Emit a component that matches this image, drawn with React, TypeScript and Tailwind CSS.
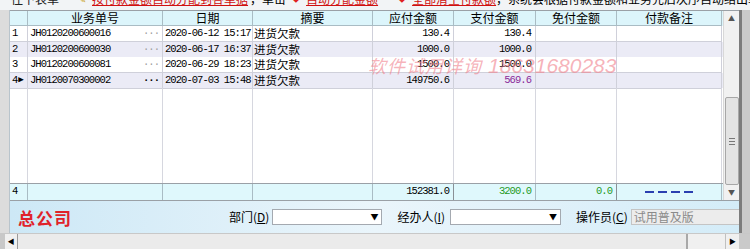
import React from "react";

const cols = "grid grid-cols-[18px_135px_90px_120px_81px_82px_81px_105px]";
const mono = "font-['Liberation_Mono',monospace] text-[10.5px] tracking-[-0.95px] whitespace-nowrap overflow-hidden";
const line = "border-r border-b border-[#cfd0da]";

const rows = [
  { no: "1", id: "JH0120200600016", date: "2020-06-12 15:17", memo: "进货欠款", due: "130.4", pay: "130.4", h: "h-[16px]" },
  { no: "2", id: "JH0120200600030", date: "2020-06-17 16:37", memo: "进货欠款", due: "1000.0", pay: "1000.0", h: "h-[15px]" },
  { no: "3", id: "JH0120200600081", date: "2020-06-29 18:23", memo: "进货欠款", due: "1500.0", pay: "1500.0", h: "h-[16px]" },
  { no: "4", id: "JH0120070300002", date: "2020-07-03 15:48", memo: "进货欠款", due: "149750.6", pay: "569.6", h: "h-[15px]" },
];

const headers = ["", "业务单号", "日期", "摘要", "应付金额", "支付金额", "免付金额", "付款备注"];

const Combo = ({ w }: { w: string }) => (
  <div className={`${w} shrink-0 h-[16px] bg-white border border-[#a4a9b0] flex justify-end items-center pr-[3px]`}>
    <span className="text-[8px] leading-none text-black">▼</span>
  </div>
);

const App = () => {
  return (
    <div className="w-[750px] h-[249px] overflow-hidden bg-[#e2e2e2] flex flex-col relative font-['Noto_Sans_CJK_SC',sans-serif] text-black">
      {/* top hint line, mostly scrolled away */}
      <div className="h-[10px] shrink-0 overflow-hidden bg-[#f2f4f6]">
        <div className="-mt-[9px] flex items-center whitespace-nowrap text-[12px] leading-[16px] pl-[11px]">
          <span className="text-[#222]">往下表单</span>
          <span className="ml-[19px] text-[#c9a21c] text-[10px]">✎</span>
          <span className="ml-[6px] text-[#d01010] underline">按付款金额自动分配到各单据</span>
          <span className="ml-[2px]">，单击</span>
          <span className="ml-[6px] text-[#e02020] text-[8px]">◆</span>
          <span className="ml-[6px] text-[#d01010] underline">自动分配金额</span>
          <span className="ml-[20px] text-[#e02020] text-[8px]">◆</span>
          <span className="ml-[6px] text-[#d01010] underline">全部清空付款额</span>
          <span>，系统会根据付款金额和业务先后次序自动结出单据</span>
        </div>
      </div>

      <div className="flex h-[223px] shrink-0">
        <div className="w-[10px] shrink-0 bg-[#dcdcdc] border-r border-[#b8c4cc]" />

        <div className="w-[729px] shrink-0 flex flex-col">
          {/* grid */}
          <div className="h-[191px] shrink-0 flex border-t border-b border-[#9aa0a6] bg-white">
            <div className="w-[713px] flex flex-col">
              <div className={`${cols} h-[15px] shrink-0 bg-[#dcf5fb] text-[12px] leading-[14px]`}>
                {headers.map((h, i) => (
                  <div key={i} className="border-r border-b border-[#a9bcc4] text-center whitespace-nowrap">
                    {h}
                  </div>
                ))}
              </div>
              {rows.map((r, i) => (
                <div key={r.no} className={`${cols} ${r.h} shrink-0 ${i % 2 ? "bg-[#ebebf6]" : "bg-white"} leading-[15px]`}>
                  <div className={`${line} ${mono} pl-[2px] flex items-center gap-[1px]`}>
                    {r.no}
                    {r.no === "4" && <span className="text-[9px] tracking-normal">▶</span>}
                  </div>
                  <div className={`${line} ${mono} pl-[2px] flex justify-between pr-[3px]`}>
                    <span>{r.id}</span>
                    <span className={r.no === "4" ? "text-black font-bold" : "text-[#a0a0a0]"}>···</span>
                  </div>
                  <div className={`${line} ${mono} pl-[2px]`}>{r.date}</div>
                  <div className={`${line} text-[11.5px] pl-[1px] whitespace-nowrap`}>{r.memo}</div>
                  <div className={`${line} ${mono} text-right pr-[4px]`}>{r.due}</div>
                  <div className={`${line} ${mono} text-right pr-[4px] ${r.no === "4" ? "text-[#8a2a9a]" : ""}`}>{r.pay}</div>
                  <div className={line} />
                  <div className={line} />
                </div>
              ))}
              <div className={`${cols} flex-1`}>
                {headers.map((_, i) => (
                  <div key={i} className="border-r border-[#d6d7df]" />
                ))}
              </div>
              <div className={`${cols} h-[17px] shrink-0 bg-[#dff8fc] border-t border-[#9aa0a6] leading-[15px]`}>
                <div className={`border-r border-[#a9bcc4] ${mono} pl-[2px]`}>4</div>
                <div className="border-r border-[#a9bcc4]" />
                <div className="border-r border-[#a9bcc4]" />
                <div className="border-r border-[#a9bcc4]" />
                <div className={`border-r border-[#8a9096] ${mono} text-right pr-[4px]`}>152381.0</div>
                <div className={`border-r border-[#a9bcc4] ${mono} text-right pr-[4px] text-[#1f9a1f]`}>3200.0</div>
                <div className={`border-r border-[#8a9096] ${mono} text-right pr-[4px] text-[#1f9a1f]`}>0.0</div>
                <div className="border-r border-[#a9bcc4] flex items-center justify-center gap-[4px]">
                  {[0, 1, 2, 3].map((k) => (
                    <span key={k} className="w-[9px] h-[2px] bg-[#2a3fb0]" />
                  ))}
                </div>
              </div>
            </div>

            {/* vertical scrollbar */}
            <div className="w-[16px] bg-[#f1f1f1] border-l border-[#d8d8d8] flex flex-col items-center">
              <div className="h-[15px] w-full flex items-center justify-center text-[7px] text-[#555]">▲</div>
              <div className="flex-1" />
              <div className="h-[88px] w-[14px] rounded-[2px] border border-[#a7a7a7] bg-[#e3e3e3] flex flex-col items-center justify-center gap-[2px]">
                <span className="w-[6px] h-px bg-[#777]" />
                <span className="w-[6px] h-px bg-[#777]" />
                <span className="w-[6px] h-px bg-[#777]" />
              </div>
              <div className="h-[15px] w-full flex items-center justify-center text-[7px] text-[#555]">▼</div>
            </div>
          </div>

          {/* bottom info panel */}
          <div className="h-[32px] shrink-0 bg-linear-to-r from-[#cde8f6] via-[#eaf5fb] to-[#d4ecf8] flex items-center text-[12px] whitespace-nowrap">
            <span className="shrink-0 ml-[8px] text-[#e0222a] text-[17px] font-bold tracking-[1px] leading-none">总公司</span>
            <span className="shrink-0 ml-[157px]">
              部门(<span className="underline">D</span>)
            </span>
            <div className="ml-[3px]">
              <Combo w="w-[110px]" />
            </div>
            <span className="shrink-0 ml-[15px]">
              经办人(<span className="underline">I</span>)
            </span>
            <div className="ml-[5px]">
              <Combo w="w-[111px]" />
            </div>
            <span className="shrink-0 ml-[15px]">
              操作员(<span className="underline">C</span>)
            </span>
            <div className="shrink-0 ml-[3px] w-[110px] h-[16px] bg-[#ececec] border border-[#c4c4c4] text-[#8a8a8a] leading-[14px] pl-[2px]">
              试用普及版
            </div>
          </div>
        </div>

        <div className="w-[11px] shrink-0 flex">
          <div className="w-[3px] bg-[#7c7c7c]" />
          <div className="flex-1 bg-[#cacaca]" />
        </div>
      </div>

      {/* horizontal scrollbar */}
      <div className="h-[16px] shrink-0 flex bg-[#f0f0f0] border-t border-[#c8c8c8]">
        <div className="w-[5px] bg-[#c8c8c8]" />
        <div className="w-[13px] flex items-center justify-center text-[7px] border-r border-[#9a9a9a]">◀</div>
        <div className="w-[670px] bg-[#ebebeb] border-r-2 border-[#a8a8a8]" />
        <div className="flex-1" />
        <div className="w-[14px] flex items-center justify-center text-[7px] border-l border-[#c0c0c0]">▶</div>
        <div className="w-[11px] bg-[#cacaca]" />
      </div>

      {/* trial watermark over the grid */}
      <div className="absolute left-[368px] top-[50px] flex items-baseline text-[#f0808c]/60 italic whitespace-nowrap pointer-events-none">
        <span className="text-[18px] tracking-[1px]">软件试用详询</span>
        <span className="ml-[6px] text-[21px] font-['Liberation_Sans',sans-serif]">18631680283</span>
      </div>
    </div>
  );
};

export default App;
